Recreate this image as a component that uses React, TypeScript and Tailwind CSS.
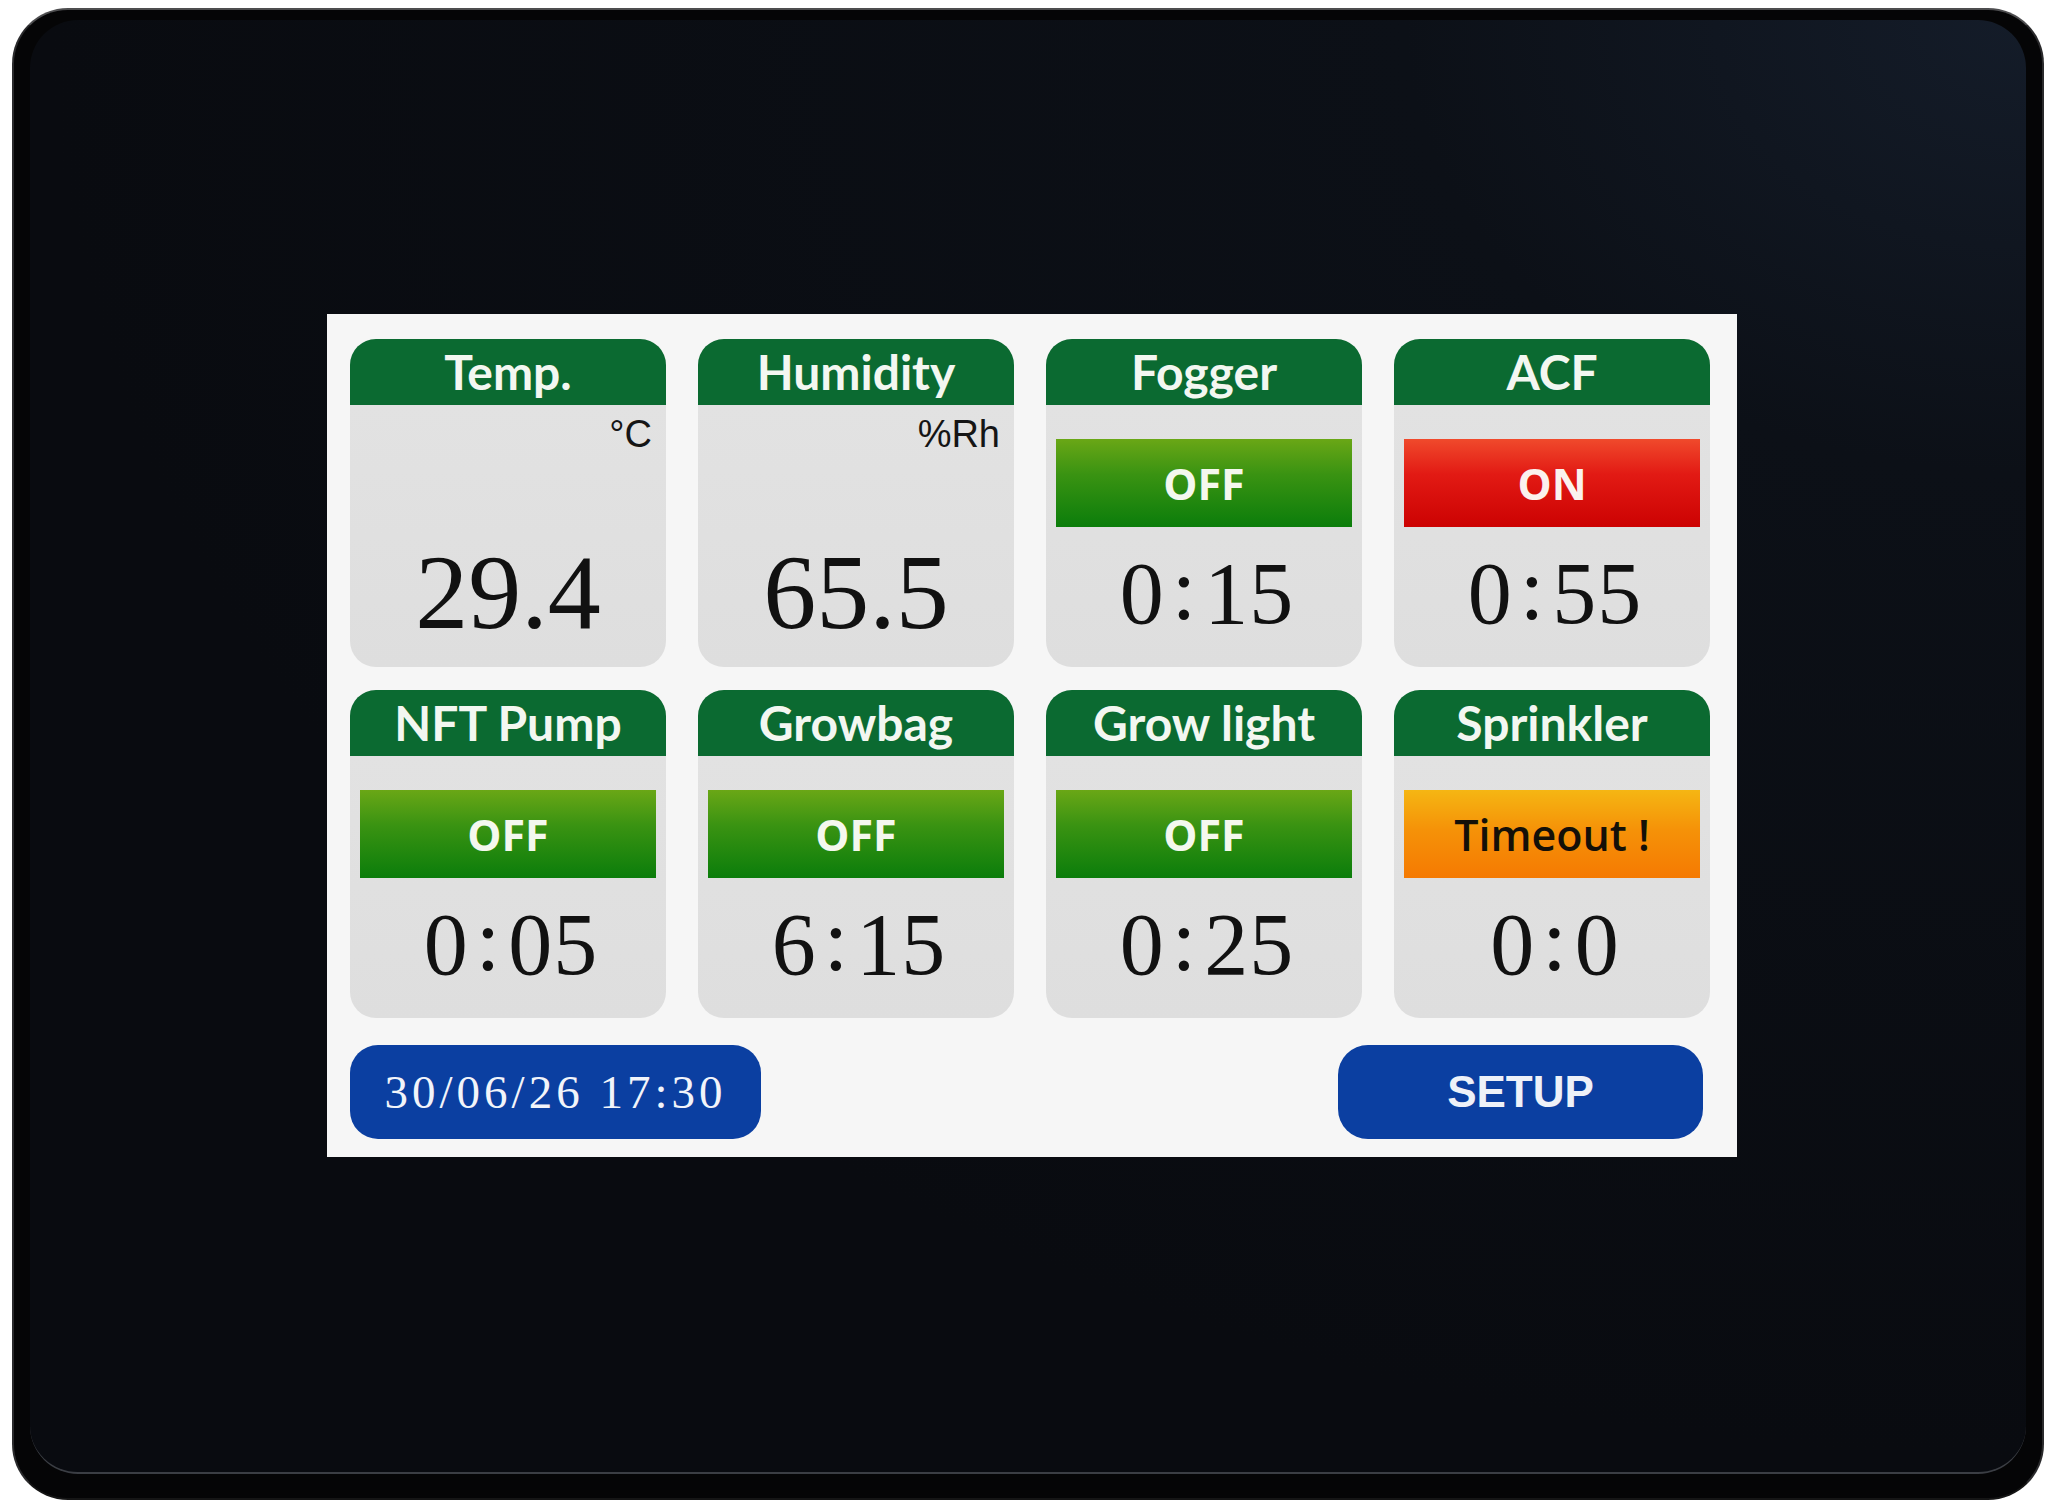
import type { ReactNode } from "react";

type Status = "off" | "on" | "timeout";

interface Sensor {
  title: string;
  unit: string;
  value: string;
}

interface Output {
  title: string;
  status: Status;
  timer: string;
}

const sensors: Sensor[] = [
  { title: "Temp.", unit: "°C", value: "29.4" },
  { title: "Humidity", unit: "%Rh", value: "65.5" },
];

const topOutputs: Output[] = [
  { title: "Fogger", status: "off", timer: "0:15" },
  { title: "ACF", status: "on", timer: "0:55" },
];

const bottomOutputs: Output[] = [
  { title: "NFT Pump", status: "off", timer: "0:05" },
  { title: "Growbag", status: "off", timer: "6:15" },
  { title: "Grow light", status: "off", timer: "0:25" },
  { title: "Sprinkler", status: "timeout", timer: "0:0" },
];

const statusStyle: Record<Status, { label: string; className: string }> = {
  off: {
    label: "OFF",
    className:
      "bg-[linear-gradient(180deg,#6aa716_0%,#3a9312_40%,#0b7d0b_100%)] text-[#f4f8ee] font-bold",
  },
  on: {
    label: "ON",
    className:
      "bg-[linear-gradient(180deg,#f04a2c_0%,#e21a14_40%,#cc0202_100%)] text-[#fbf1ee] font-bold",
  },
  timeout: {
    label: "Timeout !",
    className:
      "bg-[linear-gradient(180deg,#f5b613_0%,#f59208_45%,#f57a02_100%)] text-[#141008] font-semibold",
  },
};

function Card({ title, children }: { title: string; children: ReactNode }) {
  return (
    <div className="h-[328px] rounded-[26px] bg-[linear-gradient(180deg,#e3e3e3_0%,#dedede_100%)] overflow-hidden flex flex-col">
      <div className="h-[66px] shrink-0 bg-[#0b6a31] flex items-center justify-center font-['Lato',sans-serif] font-bold text-[48px] leading-none text-[#f3f7f1]">
        {title}
      </div>
      {children}
    </div>
  );
}

function SensorCard({ title, unit, value }: Sensor) {
  return (
    <Card title={title}>
      <div className="pt-[10px] pr-[14px] text-right font-['Liberation_Sans',Arial,sans-serif] text-[38px] leading-none text-[#151515]">
        {unit}
      </div>
      <div className="flex-1 flex items-end justify-center pb-[21px] font-['Liberation_Serif',serif] text-[106px] leading-none text-[#111]">
        {value}
      </div>
    </Card>
  );
}

function OutputCard({ title, status, timer }: Output) {
  const s = statusStyle[status];
  const [h, m] = timer.split(":");
  return (
    <Card title={title}>
      <div
        className={`mt-[34px] mx-[10px] h-[88px] flex items-center justify-center font-['Open_Sans',sans-serif] text-[43px] leading-none ${s.className}`}
      >
        {s.label}
      </div>
      <div className="flex-1 flex items-center justify-center pb-[6px] pl-[6px] font-['Liberation_Serif',serif] text-[88px] leading-none text-[#111] tracking-[1px]">
        <span>{h}</span>
        <span className="mx-[7px] relative -top-[4px]">:</span>
        <span>{m}</span>
      </div>
    </Card>
  );
}

export default function App() {
  return (
    <div className="w-[2062px] h-[1507px] bg-white pl-[12px] pt-[8px]">
      <div className="w-[2032px] h-[1492px] rounded-[56px] bg-[#050506] border-2 border-t-[#4d4d4f] border-x-[#2a2a2c] border-b-[#151515] pl-[16px] pt-[10px] pr-[16px] pb-[24px] flex">
        <div className="flex-1 rounded-[48px] border-b-2 border-b-[#3b3e44] bg-[radial-gradient(ellipse_at_100%_0%,#141c29_0%,#0c1017_22%,#090b10_70%)] pl-[297px] pt-[294px]">
          <div className="w-[1410px] h-[843px] bg-[#f6f6f6] pl-[23px] pt-[25px]">
            <div className="grid grid-cols-[316px_316px_316px_316px] gap-x-[32px] gap-y-[23px]">
              {sensors.map((s) => (
                <SensorCard key={s.title} {...s} />
              ))}
              {topOutputs.map((o) => (
                <OutputCard key={o.title} {...o} />
              ))}
              {bottomOutputs.map((o) => (
                <OutputCard key={o.title} {...o} />
              ))}
            </div>

            <div className="mt-[27px] w-[1353px] flex justify-between">
              <div className="w-[411px] h-[94px] rounded-[28px] bg-[#0b3fa1] flex items-center justify-center font-['Liberation_Serif',serif] text-[47px] leading-none text-[#f2f4fa] tracking-[4px] whitespace-pre">
                {"30/06/26 17:30"}
              </div>
              <div className="w-[365px] h-[94px] rounded-[30px] bg-[#0b3fa1] flex items-center justify-center font-['Liberation_Sans',Arial,sans-serif] font-bold text-[44px] leading-none text-[#eef1f8]">
                SETUP
              </div>
            </div>
          </div>
        </div>
      </div>
    </div>
  );
}
